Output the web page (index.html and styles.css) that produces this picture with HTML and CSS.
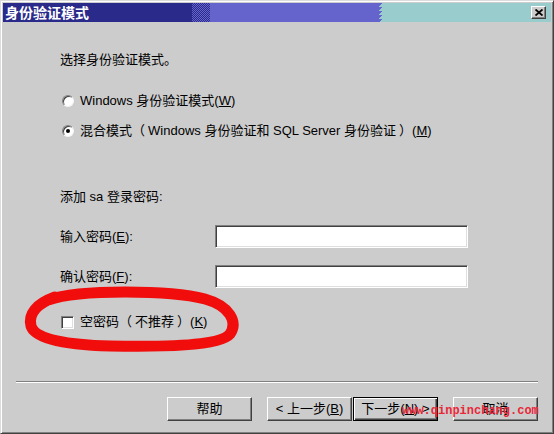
FILE: index.html
```html
<!DOCTYPE html>
<html lang="zh-CN">
<head>
<meta charset="utf-8">
<title>身份验证模式</title>
<link rel="stylesheet" href="styles.css">
</head>
<body>
<div class="window">
  <div class="titlebar">
    <span class="title">身份验证模式</span>
    <span class="close-btn"><svg width="8" height="7" viewBox="0 0 8 7"><path d="M0.5 0.5 L7.5 6.5 M7.5 0.5 L0.5 6.5" stroke="#000" stroke-width="1.8" fill="none"/></svg></span>
  </div>
  <div class="content">
    <p class="line intro">选择身份验证模式。</p>
    <div class="options">
      <div class="radio-row"><span class="radio-btn"></span><span>Windows 身份验证模式(<u>W</u>)</span></div>
      <div class="radio-row second"><span class="radio-btn checked"></span><span>混合模式<span class="pl">（</span>Windows 身份验证和 SQL Server 身份验证<span class="pr">）</span>(<u>M</u>)</span></div>
    </div>
    <p class="line sa">添加 sa 登录密码:</p>
    <div class="field first"><span class="label">输入密码(<u>E</u>):</span><span class="input"></span></div>
    <div class="field second"><span class="label">确认密码(<u>F</u>):</span><span class="input"></span></div>
    <div class="check-row"><span class="checkbox"></span><span>空密码<span class="pl">（</span>不推荐<span class="pr">）</span>(<u>K</u>)</span></div>
  </div>
  <div class="separator"></div>
  <div class="buttons">
    <span class="btn">帮助</span>
    <div class="nav">
      <span class="btn">&lt; 上一步(<u>B</u>)</span>
      <span class="btn default">下一步(<u>N</u>) &gt;</span>
    </div>
    <span class="btn">取消</span>
  </div>
  <svg class="annot" viewBox="0 0 554 434" width="554" height="434">
    <path d="M48 300 C80 289 170 290 205 299 C230 306 238 322 230 334 C220 346 160 347 110 346 C70 345 35 340 31 326 C28 314 36 304 55 297" fill="none" stroke="#f20d0d" stroke-width="11" stroke-linecap="round" stroke-linejoin="round"/>
  </svg>
  <div class="watermark">www.qinpinchang.com</div>
</div>
</body>
</html>
```
FILE: styles.css
```css
html, body {
  margin: 0;
  padding: 0;
  background: #cccccc;
}

.window {
  position: relative;
  width: 554px;
  height: 434px;
  box-sizing: border-box;
  border: 1px solid;
  border-color: #dcdcdc #404040 #404040 #dcdcdc;
  padding: 2px;
  box-shadow: inset 1px 1px #ffffff, inset -1px -1px #808080;
  background: #cccccc;
  display: flex;
  flex-direction: column;
  font-family: "Liberation Sans", "Noto Sans CJK SC", sans-serif;
  font-size: 13px;
  color: #000;
  overflow: hidden;
}

.titlebar {
  flex: none;
  height: 19px;
  display: flex;
  align-items: center;
  justify-content: space-between;
  padding: 0 5px 0 2px;
  background:
    linear-gradient(to right, #2a2a8a 0 189px, transparent 189px 207px, #6464cc 207px 375px, transparent 375px 380px, #99cccc 380px),
    linear-gradient(to bottom right, #6464cc 50%, #99cccc 50%) 375px 0 / 5px 4px repeat-y,
    repeating-conic-gradient(#2a2a8a 0 25%, #6464cc 0 50%) 0 0 / 2px 2px;
}

.title {
  color: #ffffff;
  font-family: "Noto Sans CJK SC", sans-serif;
  font-weight: bold;
  font-size: 14px;
  line-height: 19px;
}

.close-btn {
  width: 15px;
  height: 13px;
  box-sizing: border-box;
  background: #cccccc;
  border: 1px solid;
  border-color: #ffffff #404040 #404040 #ffffff;
  box-shadow: inset -1px -1px #808080;
  display: flex;
  align-items: center;
  justify-content: center;
}

.close-btn svg {
  display: block;
}

.content {
  flex: 1;
  padding: 30px 0 0 57px;
}

.line {
  margin: 0;
  line-height: 16px;
  height: 16px;
}

.options {
  margin-top: 25px;
}

.radio-row {
  display: flex;
  align-items: center;
  height: 16px;
  line-height: 16px;
  gap: 6px;
}

.radio-row.second {
  margin-top: 14px;
}

.pl {
  margin-right: 3px;
}

.pr {
  margin-left: 3px;
}

.radio-btn {
  position: relative;
  width: 12px;
  height: 12px;
  margin-left: 2px;
  box-sizing: border-box;
  border-radius: 50%;
  background: #ffffff;
  border: 1px solid;
  border-color: #808080 #f4f4f4 #f4f4f4 #808080;
  box-shadow: inset 1px 1px #404040;
}

.radio-btn.checked::after {
  content: "";
  position: absolute;
  left: 3px;
  top: 3px;
  width: 4px;
  height: 4px;
  border-radius: 50%;
  background: #000;
}

.sa {
  margin-top: 50px;
}

.field {
  display: flex;
  align-items: center;
  height: 23px;
}

.field.first {
  margin-top: 20px;
}

.field.second {
  margin-top: 17px;
}

.label {
  width: 155px;
  line-height: 16px;
}

.input {
  width: 253px;
  height: 23px;
  box-sizing: border-box;
  background: #ffffff;
  border: 1px solid;
  border-color: #808080 #ffffff #ffffff #808080;
  box-shadow: inset 1px 1px #404040, inset -1px -1px #dedede;
}

.check-row {
  margin-top: 26px;
  display: flex;
  align-items: center;
  height: 16px;
  line-height: 16px;
  gap: 6px;
}

.checkbox {
  width: 13px;
  height: 13px;
  margin-left: 1px;
  box-sizing: border-box;
  background: #ffffff;
  border: 1px solid;
  border-color: #808080 #ffffff #ffffff #808080;
  box-shadow: inset 1px 1px #404040, inset -1px -1px #dedede;
}

.separator {
  flex: none;
  margin: 0 13px;
  border-top: 1px solid #808080;
  border-bottom: 1px solid #ffffff;
}

.buttons {
  flex: none;
  display: flex;
  justify-content: flex-end;
  gap: 15px;
  padding: 14px 13px 10px 0;
}

.nav {
  display: flex;
  gap: 1px;
}

.btn {
  width: 85px;
  height: 24px;
  box-sizing: border-box;
  display: flex;
  align-items: center;
  justify-content: center;
  border: 1px solid;
  border-color: #ffffff #404040 #404040 #ffffff;
  box-shadow: inset -1px -1px #808080;
  line-height: 16px;
  white-space: nowrap;
}

.btn.default {
  border-color: #000000;
  box-shadow: inset 1px 1px #ffffff, inset -1px -1px #404040, inset -2px -2px #808080;
}

.annot {
  position: absolute;
  left: -1px;
  top: -1px;
  pointer-events: none;
}

.watermark {
  position: absolute;
  left: 401px;
  top: 404px;
  font-family: "Liberation Mono", monospace;
  font-weight: bold;
  font-size: 12px;
  line-height: 12px;
  color: #e8283a;
  white-space: nowrap;
}
```
